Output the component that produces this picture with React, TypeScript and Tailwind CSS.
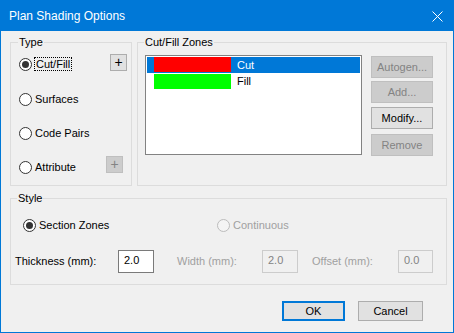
import React from "react";

const font = "font-['Liberation_Sans','Arial',sans-serif]";

function Radio({ checked, disabled }: { checked?: boolean; disabled?: boolean }) {
  return (
    <span
      className={`flex h-[13px] w-[13px] shrink-0 items-center justify-center rounded-full border ${
        disabled ? "border-[#bcbcbc] bg-[#f4f4f4]" : "border-[#333333] bg-white"
      }`}
    >
      {checked && <span className="h-[7px] w-[7px] rounded-full bg-[#333333]" />}
    </span>
  );
}

function Btn({
  label,
  disabled,
  className = "",
}: {
  label: string;
  disabled?: boolean;
  className?: string;
}) {
  return (
    <div
      className={`flex items-center justify-center border text-[11px] ${
        disabled
          ? "border-[#bfbfbf] bg-[#cccccc] text-[#838383]"
          : "border-[#adadad] bg-[#e1e1e1] text-black"
      } ${className}`}
    >
      {label}
    </div>
  );
}

function Field({ value, disabled, className = "" }: { value: string; disabled?: boolean; className?: string }) {
  return (
    <div
      className={`flex h-[23px] items-center border pl-[5px] pb-[2px] text-[11px] ${
        disabled ? "border-[#cccccc] bg-[#f0f0f0] text-[#838383]" : "border-[#7a7a7a] bg-white text-black"
      } ${className}`}
    >
      {value}
    </div>
  );
}

export default function App() {
  return (
    <div className={`flex h-[333px] w-[454px] flex-col border border-[#0078d7] bg-[#f0f0f0] ${font}`}>
      {/* title bar */}
      <div className="flex h-[30px] shrink-0 items-center bg-[#0078d7] pl-[8px] pr-[10px] text-[12px] text-white">
        <span className="pb-[1px]">Plan Shading Options</span>
        <svg className="ml-auto" width="11" height="11" viewBox="0 0 11 11">
          <path d="M0.5 0.5 L10.5 10.5 M10.5 0.5 L0.5 10.5" stroke="white" strokeWidth="1" />
        </svg>
      </div>

      <div className="flex flex-1 flex-col pl-[9px] pt-[4px] text-[11px] text-black">
        <div className="flex gap-[5px]">
          {/* Type */}
          <fieldset className="h-[151px] w-[122px] border border-[#dcdcdc]">
            <legend className="ml-[7px] px-px leading-[14px]">Type</legend>
            <div className="mt-[7px] flex flex-col pl-[8px]">
              <div className="flex h-[16px] items-center">
                <Radio checked />
                <span className="ml-[2px] border border-dotted border-black px-px leading-[12px]">Cut/Fill</span>
                <Btn label="+" className="mb-[4px] ml-auto mr-[4px] h-[17px] w-[17px] text-[14px]" />
              </div>
              <div className="mt-[19px] flex h-[16px] items-center">
                <Radio />
                <span className="ml-[3px]">Surfaces</span>
              </div>
              <div className="mt-[18px] flex h-[16px] items-center">
                <Radio />
                <span className="ml-[3px]">Code Pairs</span>
              </div>
              <div className="mt-[18px] flex h-[16px] items-center">
                <Radio />
                <span className="ml-[3px]">Attribute</span>
                <Btn label="+" disabled className="mb-[6px] ml-auto mr-[8px] h-[17px] w-[17px] text-[14px]" />
              </div>
            </div>
          </fieldset>

          {/* Cut/Fill Zones */}
          <fieldset className="h-[151px] w-[310px] border border-[#dcdcdc]">
            <legend className="ml-[6px] px-px leading-[14px]">Cut/Fill Zones</legend>
            <div className="mt-[6px] flex pl-[7px]">
              <div className="h-[100px] w-[217px] border border-[#828282] bg-white p-px">
                <div className="flex h-[16px] items-start bg-[#0078d7] text-white">
                  <span className="ml-[7px] h-[15px] w-[77px] bg-[#ff0000]" />
                  <span className="ml-[6px] leading-[16px]">Cut</span>
                </div>
                <div className="flex h-[16px] items-end">
                  <span className="ml-[7px] h-[15px] w-[77px] bg-[#00ff00]" />
                  <span className="ml-[6px] leading-[16px]">Fill</span>
                </div>
              </div>
              <div className="ml-[9px] mt-px flex flex-col">
                <Btn label="Autogen..." disabled className="h-[22px] w-[62px]" />
                <Btn label="Add..." disabled className="mt-[3px] h-[22px] w-[62px]" />
                <Btn label="Modify..." className="mt-[4px] h-[22px] w-[62px]" />
                <Btn label="Remove" disabled className="mt-[5px] h-[22px] w-[62px]" />
              </div>
            </div>
          </fieldset>
        </div>

        {/* Style */}
        <fieldset className="mt-[5px] h-[94px] w-[437px] border border-[#dcdcdc]">
          <legend className="ml-[6px] px-px leading-[14px]">Style</legend>
          <div className="mt-[12px] flex h-[16px] items-center pl-[12px]">
            <div className="flex w-[194px] items-center">
              <Radio checked />
              <span className="ml-[3px]">Section Zones</span>
            </div>
            <Radio disabled />
            <span className="ml-[3px] text-[#a0a0a0]">Continuous</span>
          </div>
          <div className="mt-[17px] flex items-center pl-[4px]">
            <span className="w-[103px]">Thickness (mm):</span>
            <Field value="2.0" className="w-[36px]" />
            <span className="ml-[23px] w-[85px] text-[#a0a0a0]">Width (mm):</span>
            <Field value="2.0" disabled className="w-[36px]" />
            <span className="ml-[14px] w-[86px] text-[#a0a0a0]">Offset (mm):</span>
            <Field value="0.0" disabled className="w-[35px]" />
          </div>
        </fieldset>

        {/* footer */}
        <div className="mt-[16px] flex gap-[13px] pl-[272px]">
          <Btn label="OK" className="h-[20px] w-[63px] border-2 !border-[#0078d7]" />
          <Btn label="Cancel" className="h-[20px] w-[65px]" />
        </div>
      </div>
    </div>
  );
}
